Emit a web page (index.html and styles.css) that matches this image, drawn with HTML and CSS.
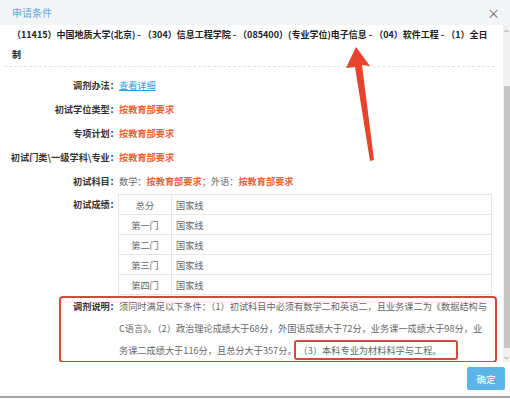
FILE: index.html
```html
<!DOCTYPE html>
<html lang="zh-CN">
<head>
    <meta charset="UTF-8">
    <meta name="viewport" content="width=device-width, initial-scale=1.0">
    <title>申请条件</title>
    <link rel="stylesheet" href="styles.css">
</head>
<body>
    <div class="dialog">
        <div class="titlebar">
            <span class="title">申请条件</span>
            <span class="close">×</span>
        </div>
        <div class="body">
            <div class="content">
                <div class="program">（11415）中国地质大学(北京) - （304）信息工程学院 - （085400）(专业学位)电子信息 - （04）软件工程 - （1）全日<br>制</div>
                <div class="fields">
                    <div class="row">
                        <div class="label">调剂办法：</div>
                        <div class="value"><a class="link" href="#">查看详细</a></div>
                    </div>
                    <div class="row">
                        <div class="label">初试学位类型：</div>
                        <div class="value"><span class="req">按教育部要求</span></div>
                    </div>
                    <div class="row">
                        <div class="label">专项计划：</div>
                        <div class="value"><span class="req">按教育部要求</span></div>
                    </div>
                    <div class="row">
                        <div class="label">初试门类\一级学科\专业：</div>
                        <div class="value"><span class="req">按教育部要求</span></div>
                    </div>
                    <div class="row">
                        <div class="label">初试科目：</div>
                        <div class="value">数学：<span class="req">按教育部要求</span>；外语：<span class="req">按教育部要求</span></div>
                    </div>
                    <div class="row scores-row">
                        <div class="label">初试成绩：</div>
                        <div class="value">
                            <table class="scores">
                                <tr><td>总分</td><td>国家线</td></tr>
                                <tr><td>第一门</td><td>国家线</td></tr>
                                <tr><td>第二门</td><td>国家线</td></tr>
                                <tr><td>第三门</td><td>国家线</td></tr>
                                <tr><td>第四门</td><td>国家线</td></tr>
                            </table>
                        </div>
                    </div>
                    <div class="note">
                        <div class="label">调剂说明：</div>
                        <div class="note-text">须同时满足以下条件：（1）初试科目中必须有数学二和英语二，且业务课二为《数据结构与<br>C语言》。（2）政治理论成绩大于68分，外国语成绩大于72分，业务课一成绩大于98分，业<br>务课二成绩大于116分，且总分大于357分。<span class="mark">（3）本科专业为材料科学与工程。</span></div>
                    </div>
                </div>
            </div>
            <div class="scrollbar">
                <svg class="chevron" width="7" height="8" viewBox="0 0 7 8"><path d="M1.5 5 L3.5 3 L5.5 5" fill="none" stroke="#888" stroke-width="0.8"/></svg>
                <div class="thumb"></div>
                <svg class="chevron" width="7" height="8" viewBox="0 0 7 8"><path d="M1.5 3 L3.5 5 L5.5 3" fill="none" stroke="#888" stroke-width="0.8"/></svg>
            </div>
        </div>
        <div class="footer">
            <button class="ok">确定</button>
        </div>
        <div class="page-edge"></div>

        <!-- red annotation arrow drawn over the dialog -->
        <svg class="pointer" width="510" height="399" viewBox="0 0 510 399">
            <polygon points="356,47 370,66 362,65 374,160 370,161 355,67 346,68" fill="#e8432c"/>
        </svg>
    </div>
</body>
</html>
```

FILE: styles.css
```css
* {
    box-sizing: border-box;
}

body {
    margin: 0;
    font-family: "Noto Sans CJK SC", "Noto Sans", sans-serif;
    background: #fff;
}

.dialog {
    position: relative;
    width: 510px;
    height: 399px;
    overflow: hidden;
    display: flex;
    flex-direction: column;
}

.titlebar {
    flex: none;
    height: 25px;
    background: #f3f4f6;
    display: flex;
    align-items: center;
    justify-content: space-between;
    padding: 0 10px 0 12px;
}

.title {
    color: #5fa9d7;
    font-size: 10px;
}

.close {
    color: #666;
    font-size: 13px;
}

.body {
    flex: none;
    height: 337px;
    display: flex;
}

.content {
    flex: 1;
    overflow: hidden;
}

.program {
    margin: 0 8px 0 4px;
    padding: 0 0 1px 8px;
    font-size: 9px;
    font-weight: bold;
    line-height: 20px;
    color: #222;
    border-bottom: 1px dashed #e2e2e2;
    white-space: nowrap;
}

.fields {
    padding-top: 6px;
}

.row {
    display: grid;
    grid-template-columns: 119px 1fr;
    height: 24px;
    align-items: center;
    font-size: 9.2px;
}

.label {
    text-align: right;
    font-weight: bold;
    color: #333;
    white-space: nowrap;
}

.value {
    color: #666;
    white-space: nowrap;
}

.req {
    color: #e4633b;
    font-weight: bold;
}

.link {
    color: #2d9cdb;
    text-decoration: underline;
}

.scores-row {
    height: auto;
    align-items: start;
    margin-top: 1px;
}

.scores-row .label {
    line-height: 20px;
}

.scores {
    border-collapse: collapse;
    width: 374px;
    margin-left: -1px;
    font-size: 9.2px;
    color: #666;
}

.scores td {
    border: 1px solid #e6e6e6;
    height: 20px;
    padding: 0 4px;
}

.scores td:first-child {
    width: 53px;
    text-align: center;
}

.note {
    display: grid;
    grid-template-columns: 58px 1fr;
    margin: 1px 6px 0 59px;
    border: 2px solid #d44a3a;
    border-radius: 4px;
    font-size: 9.2px;
    line-height: 22px;
    height: 67px;
}

.note .label,
.note-text {
    margin-top: -3px;
}

.note-text {
    color: #666;
    white-space: nowrap;
}

.mark {
    display: inline-block;
    line-height: 16px;
    margin-left: -3px;
    padding: 0 14px 0 3px;
    border: 2px solid #d44a3a;
    border-radius: 3px;
}

.scrollbar {
    flex: none;
    width: 7px;
    background: #f1f1f1;
    display: flex;
    flex-direction: column;
    align-items: center;
}

.chevron {
    flex: none;
    margin-top: 2px;
}

.thumb {
    width: 6px;
    height: 262px;
    margin: 51px 0 4px;
    background: #c6c6c6;
}

.footer {
    flex: none;
    height: 34px;
    display: flex;
    justify-content: flex-end;
    align-items: flex-start;
    padding: 5px 5px 0;
}

.ok {
    width: 38px;
    height: 23px;
    border: none;
    border-radius: 2px;
    background: #5bb5e6;
    color: #fff;
    font-family: inherit;
    font-size: 9.5px;
    padding: 0;
}

.page-edge {
    flex: 1;
    border-top: 2px solid #a3a3a3;
}

.pointer {
    position: absolute;
    left: 0;
    top: 0;
    pointer-events: none;
}
```
